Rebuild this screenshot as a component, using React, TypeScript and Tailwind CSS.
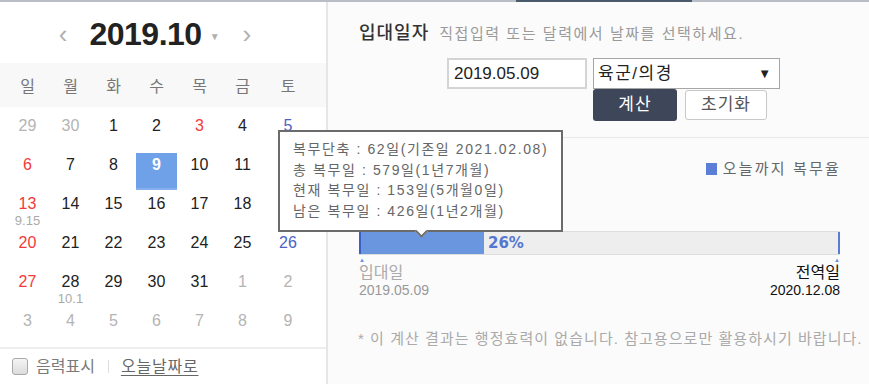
import React from "react";

const FONT = { fontFamily: '"Liberation Sans", "Noto Sans CJK KR", sans-serif' };

type Cell = { d: string; c: string; lunar?: string; sel?: boolean };

const G = "text-[#b4b4b4]";
const N = "text-[#222]";
const R = "text-[#f23a3a]";
const B = "text-[#4d62c4]";

const rows: Cell[][] = [
  [
    { d: "29", c: G },
    { d: "30", c: G },
    { d: "1", c: N },
    { d: "2", c: N },
    { d: "3", c: R },
    { d: "4", c: N },
    { d: "5", c: B },
  ],
  [
    { d: "6", c: R },
    { d: "7", c: N },
    { d: "8", c: N },
    { d: "9", c: "text-white font-bold", sel: true },
    { d: "10", c: N },
    { d: "11", c: N },
    { d: "12", c: B },
  ],
  [
    { d: "13", c: R, lunar: "9.15" },
    { d: "14", c: N },
    { d: "15", c: N },
    { d: "16", c: N },
    { d: "17", c: N },
    { d: "18", c: N },
    { d: "19", c: B },
  ],
  [
    { d: "20", c: R },
    { d: "21", c: N },
    { d: "22", c: N },
    { d: "23", c: N },
    { d: "24", c: N },
    { d: "25", c: N },
    { d: "26", c: B },
  ],
  [
    { d: "27", c: R },
    { d: "28", c: N, lunar: "10.1" },
    { d: "29", c: N },
    { d: "30", c: N },
    { d: "31", c: N },
    { d: "1", c: G },
    { d: "2", c: G },
  ],
  [
    { d: "3", c: G },
    { d: "4", c: G },
    { d: "5", c: G },
    { d: "6", c: G },
    { d: "7", c: G },
    { d: "8", c: G },
    { d: "9", c: G },
  ],
];

const weekdays = ["일", "월", "화", "수", "목", "금", "토"];

function Calendar() {
  return (
    <div className="w-[326px] shrink-0 bg-white flex flex-col">
      <div className="h-[61px] flex items-center justify-center pt-[2px] pr-[16px]">
        <span className="text-[26px] text-[#b0b0b0] mr-[22px] leading-none">‹</span>
        <span className="text-[32px] font-bold text-[#222] leading-none tracking-[-0.5px]">2019.10</span>
        <span className="text-[10px] text-[#b0b0b0] ml-[8px] mt-[6px]">▼</span>
        <span className="text-[26px] text-[#b0b0b0] ml-[23px] leading-none">›</span>
      </div>
      <div className="h-[44px] bg-[#f8f8f8] grid grid-cols-[43px_43px_43px_43px_43px_43px_48px] pl-[6px] items-center pt-[4px]">
        {weekdays.map((w) => (
          <div key={w} className="text-center text-[16px] text-[#777]">
            {w}
          </div>
        ))}
      </div>
      <div className="grid grid-cols-[43px_43px_43px_43px_43px_43px_48px] pl-[6px]">
        {rows.flat().map((cell, i) => (
          <div key={i} className="h-[39px] flex justify-center">
            <div
              className={
                "mt-[7px] w-[41px] h-[37px] flex flex-col items-center " +
                (cell.sel ? "bg-[#6fa1e8] border-b-2 border-[#86b1ee]" : "")
              }
            >
              <span className={"text-[16px] leading-[24px] " + cell.c}>{cell.d}</span>
              {cell.lunar && (
                <span className="text-[13px] leading-[10px] text-[#aaa]">{cell.lunar}</span>
              )}
            </div>
          </div>
        ))}
      </div>
      <div className="mt-[6px] border-t-2 border-[#eeeeee] flex-1 flex items-center pl-[12px]">
        <span className="w-[16px] h-[17px] rounded-[3px] border border-[#a9a9a9] bg-gradient-to-b from-[#f4f4f4] to-[#dcdcdc]" />
        <span className="ml-[8px] text-[16px] text-[#7a7a7a]">음력표시</span>
        <span className="ml-[13px] w-px h-[13px] bg-[#dddddd]" />
        <span className="ml-[12px] text-[16px] text-[#666] underline underline-offset-[3px] tracking-[0.8px]">
          오늘날짜로
        </span>
      </div>
    </div>
  );
}

function Right() {
  return (
    <div className="flex-1 bg-[#fbfbfb] flex flex-col">
      <div className="h-[136px] border-b border-[#e8e8e8]">
        <div className="flex items-baseline pl-[31px] pt-[19px] leading-[24px]">
          <span className="text-[18px] font-medium text-[#333] tracking-[1px]">입대일자</span>
          <span className="ml-[10px] text-[15px] text-[#9a9a9a] tracking-[1.55px]">
            직접입력 또는 달력에서 날짜를 선택하세요.
          </span>
        </div>
        <div className="ml-[119px] mt-[12px] grid grid-cols-[140px_187px] gap-x-[6px]">
          <div className="h-[31px] border-2 border-[#d4d4d4] bg-white flex items-center pl-[5px] text-[17px] text-[#222]">
            2019.05.09
          </div>
          <div className="h-[31px] border border-[#a6a6a6] bg-white flex items-center justify-between pl-[4px] pr-[8px] text-[17px] text-[#222]">
            <span className="tracking-[1.5px]">육군/의경</span>
            <span className="text-[13px]">▼</span>
          </div>
          <div />
          <div className="flex items-start gap-[8px]">
            <div className="w-[84px] h-[32px] rounded-[3px] bg-[#3e4659] text-white text-[17px] tracking-[1px] flex items-center justify-center">
              계산
            </div>
            <div className="mt-[1px] w-[82px] h-[30px] rounded-[3px] bg-white border border-[#c8c8c8] text-[#555] text-[17px] tracking-[1px] flex items-center justify-center">
              초기화
            </div>
          </div>
        </div>
      </div>
      <div className="flex-1 relative">
        <div className="flex justify-end items-center pr-[28px] pt-[20px]">
          <span className="w-[11px] h-[12px] bg-[#5b7fd6]" />
          <span className="ml-[6px] text-[15px] text-[#666] tracking-[2.2px]">오늘까지 복무율</span>
        </div>
        <div className="ml-[31px] mr-[29px] mt-[50px]">
          <div className="h-[24px] flex bg-[#eeeeee] border-y border-[#dedede]">
            <div className="w-[125px] h-full bg-[#6a96e0] border-l-2 border-[#3b5fc4]" />
            <span
              className="ml-[4px] text-[15px] font-bold text-[#5577d2] leading-[22px]"
              style={{ fontFamily: '"DejaVu Sans", sans-serif' }}
            >
              26%
            </span>
            <div className="ml-auto w-[2px] h-full bg-[#5b7bd4]" />
          </div>
          <div className="flex justify-between mt-[2px] h-[6px]">
            <span className="text-[6px] leading-[6px] text-[#6a8fe0]">▲</span>
            <span className="text-[6px] leading-[6px] text-[#6a8fe0]">▲</span>
          </div>
          <div className="flex justify-between mt-[1px]">
            <div className="flex flex-col">
              <span className="text-[16px] leading-[18px] text-[#aaa]">입대일</span>
              <span className="text-[14px] leading-[16px] text-[#999]">2019.05.09</span>
            </div>
            <div className="flex flex-col items-end">
              <span className="text-[16px] leading-[18px] text-[#111]">전역일</span>
              <span className="text-[14px] leading-[16px] text-[#111]">2020.12.08</span>
            </div>
          </div>
        </div>
        <div className="pl-[30px] mt-[30px] text-[15px] text-[#aaa] tracking-[1.05px] whitespace-nowrap">
          * 이 계산 결과는 행정효력이 없습니다. 참고용으로만 활용하시기 바랍니다.
        </div>
      </div>
    </div>
  );
}

export default function App() {
  return (
    <div style={FONT} className="w-[869px] h-[384px] overflow-hidden relative bg-white">
      <div className="h-[2px] bg-[#b9bec6] flex">
        <div className="ml-[516px] w-[176px] bg-[#485a6c]" />
      </div>
      <div className="h-[382px] flex">
        <Calendar />
        <div className="w-[2px] bg-[#e6e6e6]" />
        <Right />
      </div>
      <div className="absolute left-[278px] top-[130px] w-[285px] h-[102px] bg-white border-2 border-[#6b6b6b] pl-[13px] pt-[7px] text-[14px] text-[#666] leading-[20.5px] tracking-[1.6px]">
        <div>복무단축 : 62일(기존일 2021.02.08)</div>
        <div>총 복무일 : 579일(1년7개월)</div>
        <div>현재 복무일 : 153일(5개월0일)</div>
        <div>남은 복무일 : 426일(1년2개월)</div>
        <div className="absolute left-[137px] bottom-[-6px] w-[9px] h-[9px] bg-white border-r-2 border-b-2 border-[#6b6b6b] rotate-45" />
      </div>
    </div>
  );
}
